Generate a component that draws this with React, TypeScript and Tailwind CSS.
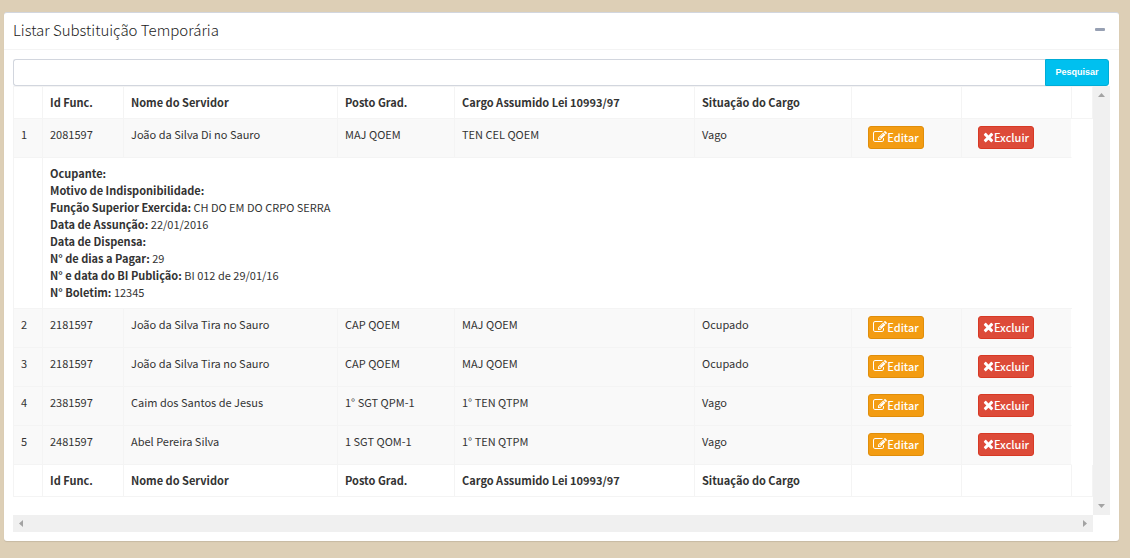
import { useState } from "react";

type Servidor = {
  id: string;
  nome: string;
  posto: string;
  cargo: string;
  situacao: string;
  detalhes?: [string, string][];
};

const servidores: Servidor[] = [
  {
    id: "2081597",
    nome: "João da Silva Di no Sauro",
    posto: "MAJ QOEM",
    cargo: "TEN CEL QOEM",
    situacao: "Vago",
    detalhes: [
      ["Ocupante:", ""],
      ["Motivo de Indisponibilidade:", ""],
      ["Função Superior Exercida:", "CH DO EM DO CRPO SERRA"],
      ["Data de Assunção:", "22/01/2016"],
      ["Data de Dispensa:", ""],
      ["N° de dias a Pagar:", "29"],
      ["N° e data do BI Publição:", "BI 012 de 29/01/16"],
      ["N° Boletim:", "12345"],
    ],
  },
  { id: "2181597", nome: "João da Silva Tira no Sauro", posto: "CAP QOEM", cargo: "MAJ QOEM", situacao: "Ocupado" },
  { id: "2181597", nome: "João da Silva Tira no Sauro", posto: "CAP QOEM", cargo: "MAJ QOEM", situacao: "Ocupado" },
  { id: "2381597", nome: "Caim dos Santos de Jesus", posto: "1° SGT QPM-1", cargo: "1° TEN QTPM", situacao: "Vago" },
  { id: "2481597", nome: "Abel Pereira Silva", posto: "1 SGT QOM-1", cargo: "1° TEN QTPM", situacao: "Vago" },
];

const titulos = [
  "",
  "Id Func.",
  "Nome do Servidor",
  "Posto Grad.",
  "Cargo Assumido Lei 10993/97",
  "Situação do Cargo",
  "",
  "",
  "",
];

function EditIcon() {
  return (
    <svg aria-hidden="true" viewBox="0 0 1792 1792" className="mb-0.5 size-3.5 shrink-0" fill="currentColor">
      <path
        transform="translate(0 1536) scale(1 -1)"
        d="M888 352l116 116l-152 152l-116 -116v-56h96v-96h56zM1328 1072q-16 16 -33 -1l-350 -350q-17 -17 -1 -33t33 1l350 350q17 17 1 33zM1408 478v-190q0 -119 -84.5 -203.5t-203.5 -84.5h-832q-119 0 -203.5 84.5t-84.5 203.5v832q0 119 84.5 203.5t203.5 84.5h832q63 0 117 -25q15 -7 18 -23q3 -17 -9 -29l-49 -49q-14 -14 -32 -8q-23 6 -45 6h-832q-66 0 -113 -47t-47 -113v-832q0 -66 47 -113t113 -47h832q66 0 113 47t47 113v126q0 13 9 22l64 64q15 15 35 7t20 -29zM1312 1216l288 -288l-672 -672h-288v288zM1756 1084l-92 -92l-288 288l92 92q28 28 68 28t68 -28l152 -152q28 -28 28 -68t-28 -68z"
      />
    </svg>
  );
}

function TimesIcon() {
  return (
    <svg aria-hidden="true" viewBox="0 0 1408 1792" className="mb-0.5 h-3.5 w-[11px] shrink-0" fill="currentColor">
      <path
        transform="translate(0 1536) scale(1 -1)"
        d="M1298 214q0 -40 -28 -68l-136 -136q-28 -28 -68 -28t-68 28l-294 294l-294 -294q-28 -28 -68 -28t-68 28l-136 136q-28 28 -28 68t28 68l294 294l-294 294q-28 28 -28 68t28 68l136 136q28 28 68 28t68 -28l294 -294l294 294q28 28 68 28t68 -28l136 -136q28 -28 28 -68t-28 -68l-294 -294l294 -294q28 -28 28 -68z"
      />
    </svg>
  );
}

function TitleRow() {
  return (
    <tr>
      {titulos.map((titulo, i) => (
        <th
          key={i}
          scope="col"
          className="h-8 border-r border-b border-[#f4f4f4] p-[7px] text-left font-bold whitespace-nowrap first:border-l"
        >
          {titulo}
        </th>
      ))}
    </tr>
  );
}

function ServidorRows({ servidor, numero }: { servidor: Servidor; numero: number }) {
  return (
    <>
      <tr className="align-top">
        <td className="border-r border-b border-l border-[#f4f4f4] bg-[#f9f9f9] p-[7px]">{numero}</td>
        {[servidor.id, servidor.nome, servidor.posto, servidor.cargo, servidor.situacao].map((texto, i) => (
          <td key={i} className="border-r border-b border-[#f4f4f4] bg-[#f9f9f9] p-[7px] whitespace-nowrap">
            {texto}
          </td>
        ))}
        <td className="border-r border-b border-[#f4f4f4] bg-[#f9f9f9] py-[7px] pl-4">
          <div className="h-6">
            <button
              type="button"
              className="flex h-[23px] w-14 items-center justify-center rounded-[3px] border border-[#e08e0b] bg-[#f39c12] font-medium text-white"
            >
              <EditIcon />
              Editar
            </button>
          </div>
        </td>
        <td className="border-r border-b border-[#f4f4f4] border-r-white bg-[#f9f9f9] py-[7px] pl-4">
          <div className="h-6">
            <button
              type="button"
              className="flex h-[23px] w-14 items-center justify-center rounded-[3px] border border-[#d73925] bg-[#dd4b39] font-medium text-white"
            >
              <TimesIcon />
              Excluir
            </button>
          </div>
        </td>
      </tr>
      {servidor.detalhes && (
        <tr>
          <td className="border-r border-b border-l border-[#f4f4f4]" />
          <td colSpan={7} className="border-b border-[#f4f4f4] p-[7px]">
            {servidor.detalhes.map(([rotulo, valor]) => (
              <p key={rotulo}>
                <b className="font-bold">{rotulo}</b> {valor}
              </p>
            ))}
          </td>
        </tr>
      )}
    </>
  );
}

export default function App() {
  const [aberto, setAberto] = useState(true);

  return (
    <main className="min-h-screen bg-[#ddcfb6] pt-3 pr-[11px] pb-4 pl-1 font-['Noto_Sans_CJK_SC','Source_Sans_Pro',sans-serif] text-[11px] leading-[17px] text-[#333]">
      <section className="rounded-[3px] border-t border-[#d2d6de] bg-white shadow-[0_1px_1px_rgba(0,0,0,0.1)]">
        <header className="flex h-[37px] items-center justify-between border-b border-[#f4f4f4] pr-[14px] pb-1 pl-[9px]">
          <h1 className="text-[15px] font-light text-[#222]">Listar Substituição Temporária</h1>
          <button
            type="button"
            aria-label={aberto ? "Recolher" : "Expandir"}
            onClick={() => setAberto(!aberto)}
            className="flex h-5 items-center"
          >
            <span className="h-[3px] w-[10px] rounded-[1px] bg-[#97a0b3]" />
          </button>
        </header>

        {aberto && (
          <div className="px-[9px] pt-[9px] pb-[9px]">
            <form className="mr-px flex h-[27px]" onSubmit={(e) => e.preventDefault()}>
              <input
                type="text"
                aria-label="Pesquisar servidor"
                className="min-w-0 flex-1 rounded-l-[3px] border border-r-0 border-[#d2d6de] px-2 outline-none"
              />
              <button
                type="submit"
                className="w-16 rounded-r-[3px] border border-[#00acd6] bg-[#00c0ef] font-['Liberation_Sans',Arial,sans-serif] text-[9px] font-bold text-white"
              >
                Pesquisar
              </button>
            </form>

            <div className="grid grid-cols-[minmax(0,1fr)_17px]">
              <div className="overflow-hidden border-t border-[#f4f4f4] pb-[18px]">
                <table className="w-full table-fixed border-separate border-spacing-0">
                  <colgroup>
                    <col className="w-[30px]" />
                    <col className="w-[81px]" />
                    <col />
                    <col className="w-[117px]" />
                    <col className="w-[240px]" />
                    <col className="w-[157px]" />
                    <col className="w-[110px]" />
                    <col className="w-[110px]" />
                    <col className="w-[21px]" />
                  </colgroup>
                  <thead>
                    <TitleRow />
                  </thead>
                  <tbody>
                    {servidores.map((servidor, i) => (
                      <ServidorRows key={i} servidor={servidor} numero={i + 1} />
                    ))}
                  </tbody>
                  <tfoot>
                    <TitleRow />
                  </tfoot>
                </table>
              </div>
              <div aria-hidden="true" className="flex flex-col items-center justify-between bg-[#f0f0f0] py-[7px]">
                <svg className="h-1 w-[7px]" viewBox="0 0 7 4" fill="#a3a3a3">
                  <path d="M3.5 0L7 4H0z" />
                </svg>
                <svg className="h-1 w-[7px]" viewBox="0 0 7 4" fill="#a3a3a3">
                  <path d="M0 0H7L3.5 4z" />
                </svg>
              </div>
              <div aria-hidden="true" className="flex h-[17px] items-center justify-between bg-[#f0f0f0] px-[6px]">
                <svg className="h-[7px] w-1" viewBox="0 0 4 7" fill="#a3a3a3">
                  <path d="M4 0V7L0 3.5z" />
                </svg>
                <svg className="h-[7px] w-1" viewBox="0 0 4 7" fill="#a3a3a3">
                  <path d="M0 0L4 3.5L0 7z" />
                </svg>
              </div>
            </div>
          </div>
        )}
      </section>
    </main>
  );
}
